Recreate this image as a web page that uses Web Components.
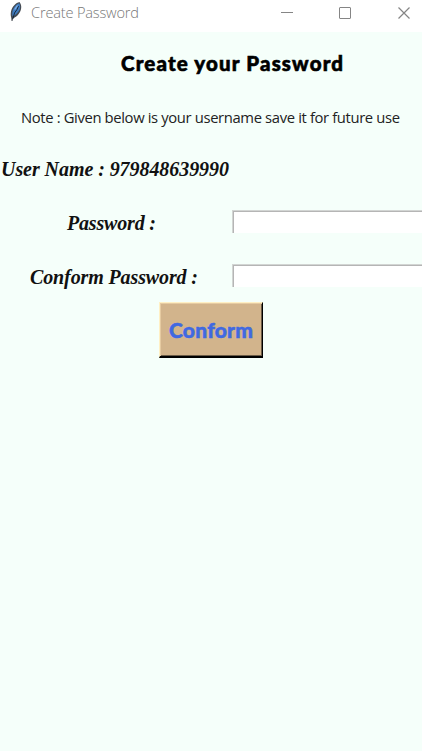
<!DOCTYPE html>
<html lang="en"><head><meta charset="utf-8"><title>Create Password</title>
<style>html,body{margin:0;height:100%;overflow:hidden;background:#f5fffa}</style></head>
<body><password-window></password-window>
<script>
const define = (name, html, ready) => customElements.define(name, class extends HTMLElement {
  connectedCallback() {
    if (this.shadowRoot) return;
    this.attachShadow({mode: 'open'}).innerHTML = html;
    if (ready) ready(this);
  }
});

// Text run whose letter spacing is adjusted to fill the given width.
define('fit-text', `<style>
:host{display:block;white-space:nowrap;line-height:24px;flex:none}
span{display:inline-block}</style><span><slot></slot></span>`, el => {
  const w = Number(el.getAttribute('width'));
  const span = el.shadowRoot.querySelector('span');
  el.style.width = w + 'px';
  const natural = span.getBoundingClientRect().width;
  span.style.letterSpacing = (w - natural) / (el.textContent.length - 1) + 'px';
});

define('title-bar', `<style>
:host{display:flex;height:32px;background:#fff;align-items:flex-start;box-sizing:border-box}
.feather{margin:2px 0 0 9px;flex:none}
fit-text{margin:2px 0 0 8px;font:300 14.6px "Open Sans","Noto Sans",sans-serif;color:#777}
.controls{margin-left:auto;flex:none}
</style>
<svg class="feather" width="14" height="20" viewBox="0 0 14 20">
<path d="M10.500 0C7 .8 3 4.500 2 9.500c-.5 2.600-.3 4.500.3 6.500l.2 3 1.200-.2.300-2.600C7.500 15.200 10.500 12 11.800 8c.8-2.700.7-5.500-1.300-8z" fill="#454b52"/>
<path d="M10.200 1.200C7 2.200 4.200 6 3.500 9.500c-.4 1.700-.3 3.200 0 4.700 3.200-1 6-4 7.200-7 .7-2 .6-4-.5-6z" fill="#3f7cc0"/>
<path d="M9.500 4 8 7.500 5.500 11 3.800 17" fill="none" stroke="#16283c" stroke-width="1"/>
<path d="M8.500 3.500 5.700 7.500" stroke="#83b2ea" stroke-width="1.300"/></svg>
<fit-text width="108">Create Password</fit-text>
<svg class="controls" width="142" height="32" fill="none" stroke="#858585">
<path d="M1 12.500h12"/><rect x="59.500" y="7.500" width="11" height="11" rx=".5"/>
<path d="m118.500 7.500 11 11m0-11-11 11" stroke-width="1.200"/></svg>`);

define('text-entry', `<style>
:host{display:block;width:190px;height:23px;box-sizing:border-box;overflow:hidden;flex:none}
input{display:block;width:200px;height:23px;box-sizing:border-box;margin:0;padding:2px;outline:0;background:#fff;
border:solid;border-width:1px 0 0 1px;border-color:#d2d5d3;box-shadow:inset 1px 1px #b5b5b5}
</style><input type="password">`);

define('form-row', `<style>
:host{display:flex;height:54px;align-items:flex-start;box-sizing:border-box}
.label{width:232px;flex:none;display:flex;box-sizing:border-box;padding-left:var(--indent);padding-top:1px;
font:italic bold 20px "Liberation Serif",serif;color:#111}
</style><div class="label"><slot></slot></div><text-entry></text-entry>`);

define('raised-button', `<style>
:host{display:block;width:104px;height:56px}
button{display:flex;align-items:center;justify-content:center;width:104px;height:56px;margin:0;padding:0;
background:#d2b48c;border:1px solid;border-color:#fff0c4 #000 #000 #fff0c4;border-width:1px 1px 2px 1px;
box-shadow:inset 1px 1px #e6cba2,inset -1px -1px #6b5b46;color:#4169e1;
font:900 21px Lato,sans-serif;-webkit-text-stroke:.5px #4169e1}
</style><button><slot></slot></button>`);

define('password-window', `<style>
:host{display:block;width:422px;height:751px;background:#f5fffa;color:#000}
main{display:flex;flex-direction:column}
.heading{margin:19px 0 0 121px;font:900 20.5px Lato,sans-serif;-webkit-text-stroke:.6px #000}
.note{margin:32px 0 0 21px;font:14.8px "Open Sans","Noto Sans",sans-serif;color:#222}
.user{margin:31px 0 29px 1px;font:italic bold 20px "Liberation Serif",serif;color:#111}
raised-button{margin:-16px 0 0 159px}
</style>
<title-bar></title-bar>
<main>
<fit-text class="heading" width="222">Create your Password</fit-text>
<fit-text class="note" width="379">Note : Given below is your username save it for future use</fit-text>
<fit-text class="user" width="228">User Name : 979848639990</fit-text>
<form-row style="--indent:67px"><fit-text width="89">Password :</fit-text></form-row>
<form-row style="--indent:30px"><fit-text width="168">Conform Password :</fit-text></form-row>
<raised-button><fit-text width="84">Conform</fit-text></raised-button>
</main>`);
</script></body></html>
